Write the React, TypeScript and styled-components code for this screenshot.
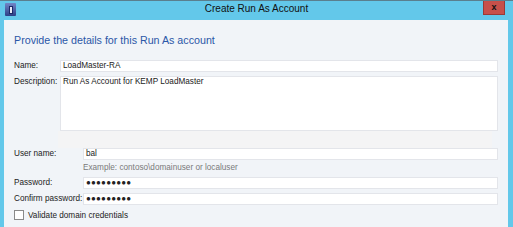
import React from "react";
import styled, { createGlobalStyle } from "styled-components";

const Global = createGlobalStyle`
  html, body { margin: 0; padding: 0; background: #63c8ea; }
  body { font-family: "Segoe UI", "Noto Sans", "Open Sans", sans-serif; overflow: hidden; }
`;

const Win = styled.div`
  width: 513px;
  height: 227px;
  display: flex;
  flex-direction: column;
  background: #63c8ea;
  border-top: 1px solid #5a7f8e;
  box-sizing: border-box;
  overflow: hidden;
`;

const TitleBar = styled.div`
  height: 19px;
  flex: none;
  display: flex;
  align-items: center;
  position: relative;
  padding-left: 5px;
`;

const AppIcon = styled.div`
  width: 11px;
  height: 13px;
  border-radius: 1px;
  background: linear-gradient(#7286c6, #2c3f86);
  display: flex;
  align-items: center;
  justify-content: center;
  margin-top: -2px;
`;

const IconBar = styled.div`
  width: 4px;
  height: 8px;
  background: #e8ecf6;
  border: 1px solid #1c2a66;
  box-sizing: border-box;
`;

const Title = styled.div`
  position: absolute;
  left: 0;
  right: 0;
  top: 2px;
  text-align: center;
  font-family: "Liberation Sans", Arial, sans-serif;
  font-size: 10px;
  color: #111;
`;

const Close = styled.div`
  position: absolute;
  right: 8px;
  top: -1px;
  width: 22px;
  height: 15px;
  background: #c7504a;
  border: 1px solid #9a3a36;
  border-top: none;
  box-sizing: border-box;
  display: flex;
  align-items: center;
  justify-content: center;
  color: #111;
  font-family: "Liberation Sans", Arial, sans-serif;
  font-weight: bold;
  font-size: 9px;
`;

const Body = styled.div`
  flex: 1;
  margin: 0 5px 0 4px;
  background: #f1f4f8;
  padding: 12px 10px 0 10px;
  display: flex;
  flex-direction: column;
  font-family: "Liberation Sans", Arial, sans-serif;
  font-size: 8.2px;
  color: #222;
`;

const Heading = styled.div`
  font-family: "Liberation Sans", Arial, sans-serif;
  font-size: 10.7px;
  color: #2b57a7;
  height: 16px;
  line-height: 16px;
  margin-bottom: 12px;
`;

const Grid = styled.div<{ $col: number }>`
  display: grid;
  grid-template-columns: ${(p) => p.$col}px 1fr;
  row-gap: 4px;
`;

const Label = styled.div`
  line-height: 12px;
  white-space: nowrap;
`;

const Field = styled.div<{ $h?: number }>`
  height: ${(p) => p.$h ?? 12}px;
  box-sizing: border-box;
  background: #fff;
  border: 1px solid #e3e5ea;
  padding: 0 2px;
  line-height: 10px;
  white-space: nowrap;
  overflow: hidden;
`;

const Dots = styled.span`
  font-size: 8px;
  letter-spacing: 0.2px;
  font-weight: bold;
  line-height: 10px;
`;

const Shade = styled.div`
  height: 17px;
  margin: 0 6px 0 44px;
  background: #f4f4f5;
`;

const Hint = styled.div`
  color: #7a7a7a;
  line-height: 11px;
  margin-top: -2px;
`;

const CheckRow = styled.div`
  display: flex;
  align-items: center;
  gap: 4px;
  margin-top: 5px;
`;

const Box = styled.div`
  width: 10px;
  height: 10px;
  box-sizing: border-box;
  border: 1px solid #8a8a8a;
  background: #fff;
`;

export default function App() {
  return (
    <>
      <Global />
      <Win>
        <TitleBar>
          <AppIcon>
            <IconBar />
          </AppIcon>
          <Title>Create Run As Account</Title>
          <Close>x</Close>
        </TitleBar>
        <Body>
          <Heading>Provide the details for this Run As account</Heading>
          <Grid $col={46}>
            <Label>Name:</Label>
            <Field>LoadMaster-RA</Field>
            <Label>Description:</Label>
            <Field $h={55}>Run As Account for KEMP LoadMaster</Field>
          </Grid>
          <Shade />
          <Grid $col={69}>
            <Label>User name:</Label>
            <Field>bal</Field>
            <span />
            <Hint>Example: contoso\domainuser or localuser</Hint>
            <Label>Password:</Label>
            <Field>
              <Dots>●●●●●●●●●</Dots>
            </Field>
            <Label>Confirm password:</Label>
            <Field>
              <Dots>●●●●●●●●●</Dots>
            </Field>
          </Grid>
          <CheckRow>
            <Box />
            <span>Validate domain credentials</span>
          </CheckRow>
        </Body>
      </Win>
    </>
  );
}
